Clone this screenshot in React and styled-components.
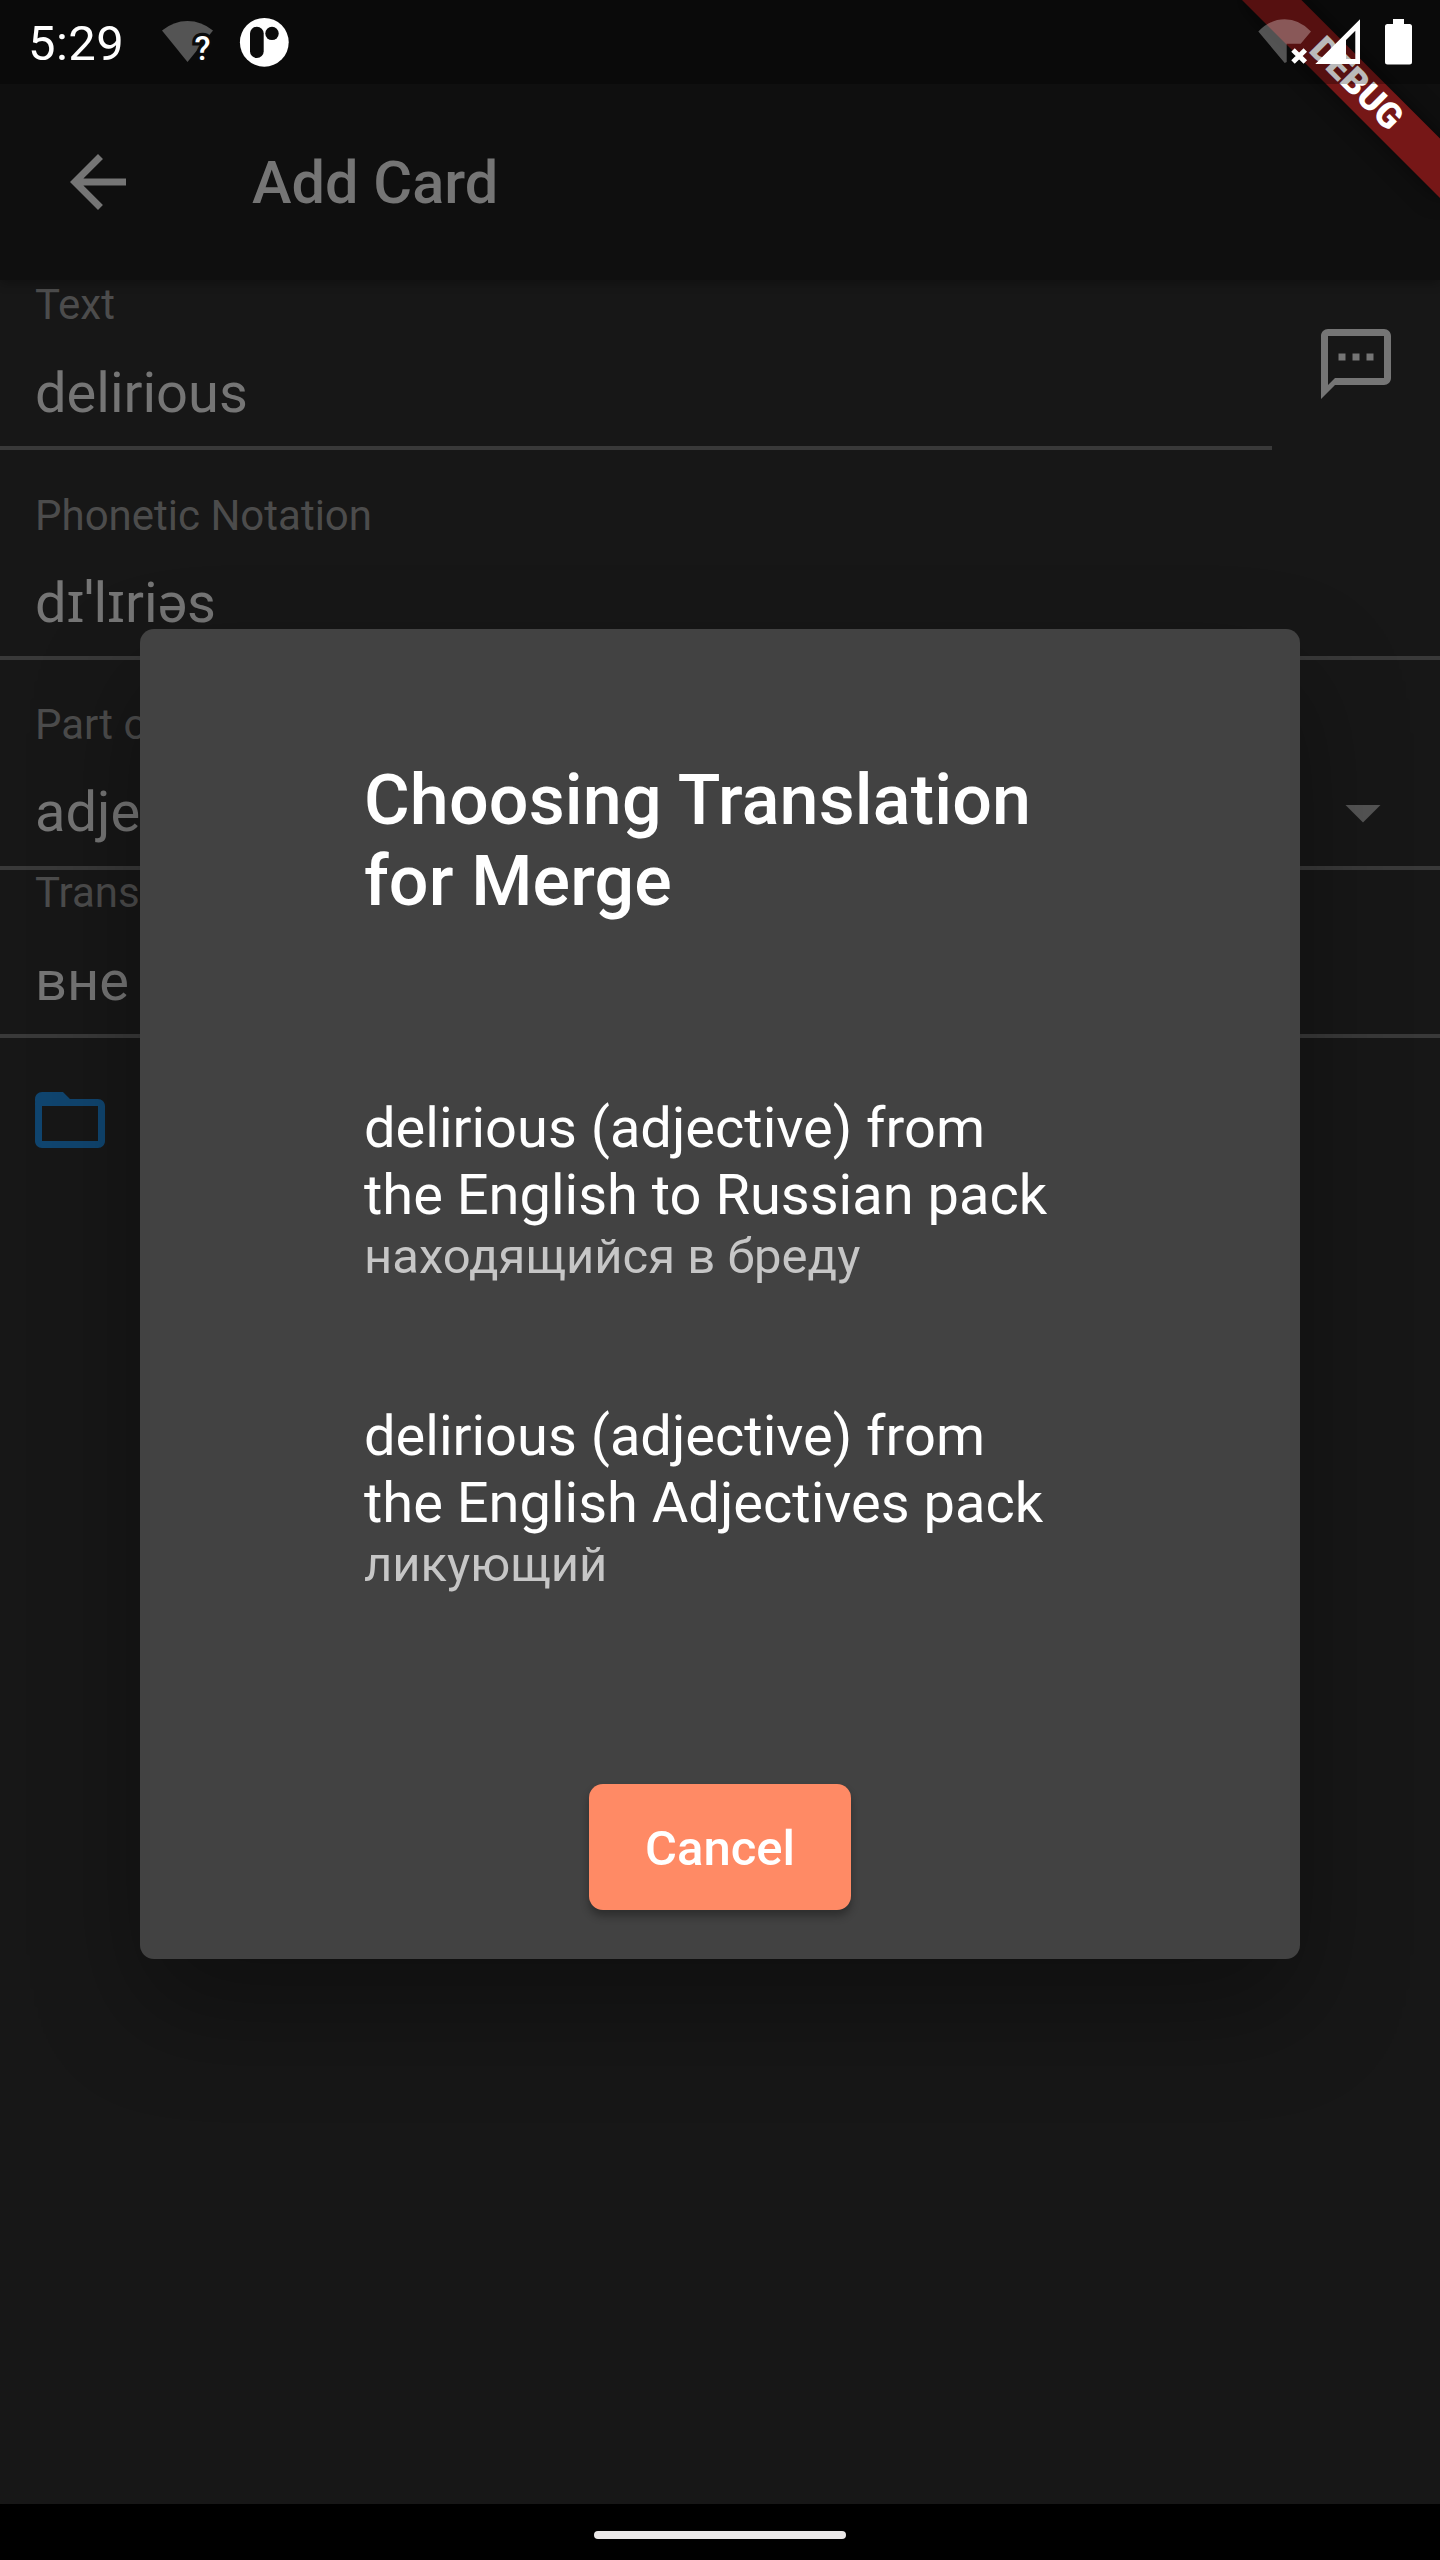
import React from "react";
import styled, { createGlobalStyle } from "styled-components";

const GlobalStyle = createGlobalStyle`
  * { box-sizing: border-box; }
  body { margin: 0; background: #171717; }
`;

const Screen = styled.div`
  position: relative;
  display: flex;
  flex-direction: column;
  width: 1440px;
  height: 2560px;
  overflow: hidden;
  background: #171717;
  font-family: Roboto, "Noto Sans", sans-serif;
`;

const StatusBar = styled.header`
  position: absolute;
  inset: 0 0 auto 0;
  z-index: 4;
  display: flex;
  align-items: flex-start;
  height: 84px;
  padding-left: 28px;
  background: rgba(0, 0, 0, 0.27);
`;

const Clock = styled.span`
  width: 132px;
  padding-top: 15px;
  font-size: 49px;
  line-height: 57px;
  letter-spacing: 0.4px;
  color: #fff;
`;

const StatusIcons = styled.svg`
  display: block;
  flex: none;
  height: 84px;
  width: ${(p) => p.$width}px;
  margin-left: ${(p) => (p.$end ? "auto" : 0)};
`;

const AppBar = styled.nav`
  position: relative;
  z-index: 1;
  flex: none;
  display: flex;
  align-items: center;
  height: 280px;
  padding: 84px 56px 0;
  gap: 112px;
  background: #0f0f0f;
  box-shadow: 0 3px 10px rgba(0, 0, 0, 0.3);
`;

const Icon = styled.svg`
  display: block;
  flex: none;
  width: 84px;
  height: 84px;
  fill: ${(p) => p.$color || "#757575"};
`;

const Heading = styled.h1`
  margin: 0;
  padding-top: 2px;
  font-size: 59.5px;
  line-height: 70px;
  font-weight: 500;
  color: #757575;
`;

const Form = styled.main`
  flex: 1;
  display: flex;
  flex-direction: column;
`;

const Row = styled.div`
  display: flex;
  align-items: center;
`;

const Field = styled.div`
  flex: 1;
  display: flex;
  align-items: flex-end;
  justify-content: space-between;
  height: ${(p) => p.$height}px;
  padding: 0 35px;
  border-bottom: 4px solid #393939;
`;

const FieldText = styled.div`
  display: flex;
  flex-direction: column;
  gap: ${(p) => p.$gap}px;
  padding-bottom: ${(p) => p.$bottom}px;
  white-space: nowrap;
`;

const Label = styled.span`
  font-size: 42px;
  line-height: 49px;
  color: #4c4c4c;
`;

const Value = styled.span`
  font-size: 56px;
  line-height: 66px;
  color: #757575;
`;

const ActionSlot = styled.div`
  display: flex;
  justify-content: center;
  width: 168px;
  padding-bottom: 2px;
`;

const DropSlot = styled.div`
  padding-bottom: 12px;
`;

const FolderRow = styled.div`
  padding: 40px 28px 0;
`;

const DialogLayer = styled.div`
  position: absolute;
  inset: 84px 0 56px;
  z-index: 2;
  display: flex;
  align-items: center;
  justify-content: center;
`;

const Dialog = styled.section`
  display: flex;
  flex-direction: column;
  width: 1160px;
  height: 1330px;
  padding: 131px 224px 49px;
  border-radius: 14px;
  background: #424242;
  box-shadow: 0 50px 110px rgba(0, 0, 0, 0.33);
  color: #fff;
`;

const DialogTitle = styled.h2`
  margin: 0 0 173px;
  font-size: 70px;
  line-height: 81px;
  letter-spacing: 0.15px;
  font-weight: 500;
`;

const Choices = styled.ul`
  display: flex;
  flex-direction: column;
  gap: 118px;
  margin: 0;
  padding: 0;
  list-style: none;
`;

const Choice = styled.li`
  display: flex;
  flex-direction: column;
  width: 700px;
  height: 190px;
`;

const ChoiceTitle = styled.span`
  font-size: 56px;
  line-height: 67px;
`;

const ChoiceSubtitle = styled.span`
  margin-top: -1px;
  font-size: 49px;
  line-height: 57px;
  color: #c6c6c6;
`;

const CancelButton = styled.button`
  align-self: center;
  width: 262px;
  height: 126px;
  margin-top: auto;
  padding: 2px 0 0;
  border: 0;
  border-radius: 14px;
  background: #ff8a65;
  box-shadow: 0 6px 9px rgba(0, 0, 0, 0.32);
  font-family: inherit;
  font-size: 49px;
  font-weight: 500;
  color: #fff;
`;

const DebugRibbon = styled.div`
  position: absolute;
  top: 98px;
  right: -140px;
  z-index: 3;
  width: 280px;
  height: 42px;
  transform-origin: 140px -98px;
  transform: rotate(45deg);
  background: #761717;
  box-shadow: 0 0 21px rgba(0, 0, 0, 0.5);
  font-size: 35.7px;
  line-height: 40px;
  font-weight: 900;
  text-align: center;
  color: #fff;
`;

const SystemNav = styled.footer`
  flex: none;
  display: flex;
  justify-content: center;
  height: 56px;
  padding-top: 27px;
  background: #000;
`;

const HomeHandle = styled.div`
  width: 252px;
  height: 8px;
  border-radius: 4px;
  background: #ebe9e9;
`;

const choices = [
  {
    title: "delirious (adjective) from the English to Russian pack",
    subtitle: "находящийся в бреду",
  },
  {
    title: "delirious (adjective) from the English Adjectives pack",
    subtitle: "ликующий",
  },
];

function TextField({ label, value, height = 210, gap = 31, bottom = 20, children }) {
  return (
    <Field $height={height}>
      <FieldText $gap={gap} $bottom={bottom}>
        <Label>{label}</Label>
        <Value>{value}</Value>
      </FieldText>
      {children}
    </Field>
  );
}

function TextFieldRow(props) {
  return (
    <Row>
      <TextField {...props} />
    </Row>
  );
}

export default function App() {
  return (
    <Screen>
      <GlobalStyle />
      <StatusBar>
        <Clock>5:29</Clock>
        <StatusIcons $width={140} viewBox="160 0 140 84">
          <path d="M162 30.5Q173.500 21 187.500 21T213 30.500L187.500 62Z" fill="#545454" />
          <text
            x="194.500"
            y="60.300"
            fontSize="33"
            fontWeight="500"
            fill="#fff"
            stroke="#0b0b0b"
            strokeWidth="6.500"
            paintOrder="stroke"
          >
            ?
          </text>
          <circle cx="264.300" cy="42.300" r="24.400" fill="#fff" />
          <rect x="250" y="26.700" width="13.700" height="31.300" rx="6.850" fill="#0b0b0b" />
          <circle cx="272" cy="33.400" r="6.700" fill="#0b0b0b" />
        </StatusIcons>
        <StatusIcons $width={190} $end viewBox="1250 0 190 84">
          <path
            d="M1258.300 31.500Q1270 19.300 1284.700 19.300T1311 31.500L1300.700 43.700H1286.700V62L1284.700 63Z"
            fill="#fff"
            fillOpacity="0.3"
          />
          <path d="M1293 50L1305.300 62M1305.300 50L1293 62" stroke="#fff" strokeWidth="5" />
          <path
            fillRule="evenodd"
            d="M1315.300 64L1360 19.300V64ZM1346 40V59H1355.300V30.700Z"
            fill="#fff"
          />
          <path
            d="M1393 19h11v5h5.500a2.500 2.500 0 0 1 2.500 2.500v35.500a2.500 2.500 0 0 1-2.500 2.500h-22a2.500 2.500 0 0 1-2.500-2.500v-35.500a2.500 2.500 0 0 1 2.500-2.500h5.500z"
            fill="#fff"
          />
        </StatusIcons>
      </StatusBar>

      <AppBar>
        <Icon viewBox="0 0 24 24">
          <path d="M20 11H7.830l5.590-5.590L12 4l-8 8 8 8 1.410-1.410L7.830 13H20v-2z" />
        </Icon>
        <Heading>Add Card</Heading>
      </AppBar>

      <Form>
        <Row>
          <TextField label="Text" value="delirious" height={170} />
          <ActionSlot>
            <Icon viewBox="0 0 24 24">
              <path d="M20 2H4c-1.100 0-2 .9-2 2v18l4-4h14c1.100 0 2-.9 2-2V4c0-1.100-.9-2-2-2zm0 14H6l-2 2V4h16v12z" />
              <path d="M7 9h2v2H7zM11 9h2v2h-2zM15 9h2v2h-2z" />
            </Icon>
          </ActionSlot>
        </Row>
        <TextFieldRow label="Phonetic Notation" value="dɪˈlɪriəs" gap={30} />
        <TextFieldRow label="Part of Speech" value="adjective" gap={30} bottom={21}>
          <DropSlot>
            <Icon viewBox="0 0 24 24" $color="#545454">
              <path d="M7 10l5 5 5-5z" />
            </Icon>
          </DropSlot>
        </TextFieldRow>
        <TextFieldRow label="Translation" value="вне себя" height={168} />
        <FolderRow>
          <Icon viewBox="0 0 24 24" $color="#10456f">
            <path d="M20 6h-8l-2-2H4c-1.100 0-1.990.9-1.990 2L2 18c0 1.100.9 2 2 2h16c1.100 0 2-.9 2-2V8c0-1.100-.9-2-2-2zm0 12H4V8h16v10z" />
          </Icon>
        </FolderRow>
      </Form>

      <SystemNav>
        <HomeHandle />
      </SystemNav>

      <DialogLayer>
        <Dialog role="dialog">
          <DialogTitle>Choosing Translation for Merge</DialogTitle>
          <Choices>
            {choices.map((c) => (
              <Choice key={c.subtitle}>
                <ChoiceTitle>{c.title}</ChoiceTitle>
                <ChoiceSubtitle>{c.subtitle}</ChoiceSubtitle>
              </Choice>
            ))}
          </Choices>
          <CancelButton>Cancel</CancelButton>
        </Dialog>
      </DialogLayer>

      <DebugRibbon>DEBUG</DebugRibbon>
    </Screen>
  );
}
